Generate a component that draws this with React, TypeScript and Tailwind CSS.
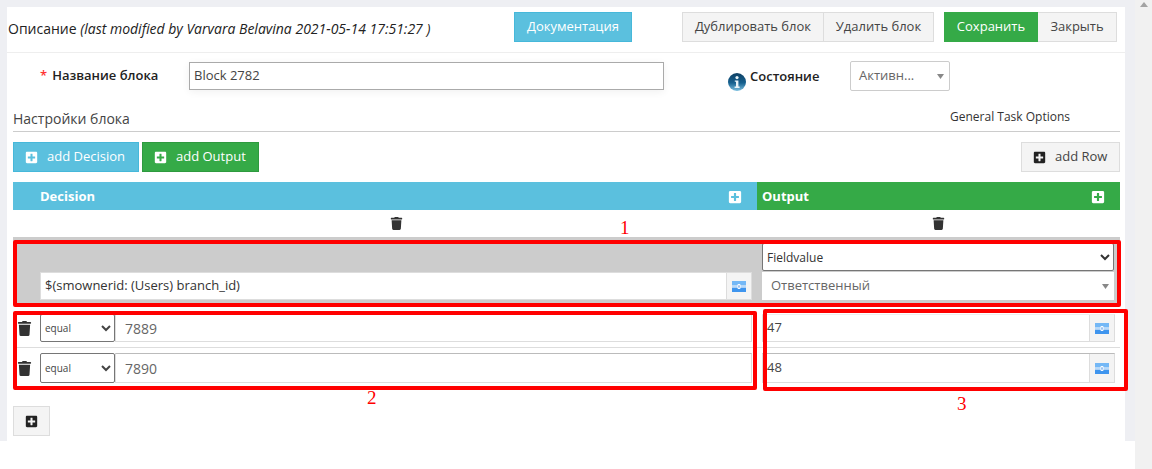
import { FaTrash, FaPlusSquare } from "react-icons/fa";

function AddonIcon() {
  return (
    <svg width="14" height="11" viewBox="0 0 14 11">
      <rect x="0" y="0" width="14" height="4.5" fill="#74b8f6" />
      <rect x="0" y="6.5" width="14" height="4.5" fill="#3f95ee" />
      <rect x="0" y="4.5" width="14" height="2" fill="#b9dafa" />
      <rect x="5.5" y="3" width="3" height="5" rx="1" fill="#ffffff" />
      <rect x="6.4" y="4.3" width="1.2" height="2.4" fill="#5a9be6" />
    </svg>
  );
}

function InfoIcon() {
  return (
    <svg width="18" height="18" viewBox="0 0 18 18" className="shrink-0">
      <defs>
        <linearGradient id="infoGrad" x1="0" y1="0" x2="0" y2="1">
          <stop offset="0" stopColor="#0e3f63" />
          <stop offset="0.55" stopColor="#16618f" />
          <stop offset="1" stopColor="#7cc0e0" />
        </linearGradient>
      </defs>
      <circle cx="9" cy="9" r="9" fill="url(#infoGrad)" />
      <circle cx="9" cy="4.6" r="1.6" fill="#e8f3f8" />
      <path d="M6.8 7.4h3.6v6.2h1.2v1.4H6.6v-1.4h1.4V8.8H6.8z" fill="#e8f3f8" />
    </svg>
  );
}

function Caret() {
  return (
    <svg width="7" height="5" viewBox="0 0 7 5" className="shrink-0">
      <path d="M0 0h7L3.5 5z" fill="#888888" />
    </svg>
  );
}

function InputAddon({ value, h, dark }: { value: string; h: string; dark?: boolean }) {
  return (
    <div className={`flex ${h} bg-white border border-[#dddddd] ${dark ? "border-t-[#bbbbbb]" : "border-t-[#eeeeee]"}`}>
      <div className="flex-1 flex items-center text-[13px] text-[#444444] pl-[4px]">{value}</div>
      <div className="w-[25px] flex items-center justify-center bg-[#f4f4f4] border-l border-[#dddddd]">
        <AddonIcon />
      </div>
    </div>
  );
}

function Row({ value, out, h, dark }: { value: string; out: string; h: string; dark?: boolean }) {
  return (
    <div className="flex">
      <div className="w-[27px] flex items-center pl-[4px] text-[#333333] text-[15px]">
        <FaTrash />
      </div>
      <select className={`w-[75px] ${h} bg-white border border-[#767676] rounded-[2px] text-[10px] text-[#444444]`} defaultValue="equal">
        <option value="equal">equal</option>
      </select>
      <div className={`w-[637px] ${h} flex items-center bg-white border border-[#dddddd] ${dark ? "border-t-[#bbbbbb]" : "border-t-[#eeeeee]"} pl-[9px] text-[14px] text-[#666666]`}>
        {value}
      </div>
      <div className="w-[10px]" />
      <div className="w-[353px]">
        <InputAddon value={out} h={h} dark={dark} />
      </div>
    </div>
  );
}

export default function App() {
  return (
    <div className="relative w-[1152px] h-[469px] overflow-hidden flex bg-[#f1f1f1] font-['Open_Sans',sans-serif] text-[#333333]">
      <div className="w-[1135px] flex flex-col">
        <div className="h-[441px] bg-[#eeeff3] pl-[7px] pt-[7px]">
          <div className="w-[1118px] h-[434px] bg-white">
            {/* Top bar */}
            <div className="h-[46px] flex items-start pt-[5px] border-b border-[#eeeeee] pr-[8px]">
              <div className="w-[507px] pl-[1px] pt-[8px] text-[14px] leading-[18px] text-[#222222] whitespace-nowrap">
                Описание <i>(last modified by Varvara Belavina 2021-05-14 17:51:27 )</i>
              </div>
              <button className="w-[118px] h-[30px] bg-[#5bc0de] border border-[#46b8da] text-white text-[13px]">Документация</button>
              <div className="ml-[50px] flex h-[30px] border border-[#dddddd] bg-[#f4f4f4] text-[13px] text-[#444444]">
                <div className="w-[141px] flex items-center justify-center border-r border-[#dddddd]">Дублировать блок</div>
                <div className="w-[109px] flex items-center justify-center">Удалить блок</div>
              </div>
              <div className="ml-[10px] flex h-[30px] text-[13px]">
                <div className="w-[94px] flex items-center justify-center bg-[#35aa47] text-white">Сохранить</div>
                <div className="w-[79px] flex items-center justify-center bg-[#f4f4f4] border border-l-0 border-[#dddddd] text-[#444444]">Закрыть</div>
              </div>
            </div>

            {/* Name row */}
            <div className="h-[47px] flex items-start pt-[9px]">
              <div className="w-[182px] h-[28px] pl-[33px] flex items-center text-[13px] font-semibold text-[#222222]">
                <span className="text-[#ff3333] mr-[5px]">*</span>Название блока
              </div>
              <div className="w-[475px] h-[28px] border border-[#aaaaaa] shadow-[0_2px_8px_rgba(0,0,0,0.06)] flex items-center pl-[4px] text-[13px] text-[#444444]">
                Block 2782
              </div>
              <div className="ml-[64px] mt-[11px]">
                <InfoIcon />
              </div>
              <div className="ml-[4px] w-[100px] mt-[5px] text-[13px] font-semibold text-[#222222] leading-[18px]">Состояние</div>
              <div className="w-[100px] h-[30px] -mt-[1px] border border-[#cccccc] rounded-[2px] flex items-center justify-between pl-[8px] pr-[5px] text-[13px] text-[#666666]">
                Активн...
                <Caret />
              </div>
            </div>

            {/* Section title */}
            <div className="ml-[6px] w-[1107px] h-[32px] border-b border-[#cccccc] flex items-start justify-between pt-[9px]">
              <span className="text-[14px] leading-[20px] text-[#444444]">Настройки блока</span>
              <span className="mr-[50px] -mt-[1px] text-[12px] leading-[18px] text-[#333333]">General Task Options</span>
            </div>

            {/* Actions */}
            <div className="ml-[6px] w-[1107px] flex items-center mt-[10px] h-[30px]">
              <button className="w-[126px] h-[30px] flex items-center pl-[11px] bg-[#5bc0de] border border-[#46b8da] text-white text-[13px]">
                <FaPlusSquare className="text-[13px] mr-[9px]" />add Decision
              </button>
              <button className="ml-[3px] w-[117px] h-[30px] flex items-center pl-[11px] bg-[#35aa47] border border-[#2e9a3f] text-white text-[13px]">
                <FaPlusSquare className="text-[13px] mr-[9px]" />add Output
              </button>
              <button className="ml-auto w-[99px] h-[30px] flex items-center pl-[11px] bg-[#f4f4f4] border border-[#dddddd] text-[#444444] text-[13px]">
                <FaPlusSquare className="text-[13px] text-[#222222] mr-[9px]" />add Row
              </button>
            </div>

            {/* Table */}
            <div className="ml-[6px] w-[1107px] mt-[10px]">
              <div className="flex h-[28px] text-white text-[13px] font-bold">
                <div className="w-[744px] bg-[#5bc0de] flex items-center justify-between pt-[2px] pl-[27px] pr-[15px]">
                  Decision
                  <FaPlusSquare className="text-[14px]" />
                </div>
                <div className="flex-1 bg-[#35aa47] flex items-center justify-between pt-[2px] pl-[5px] pr-[15px]">
                  Output
                  <FaPlusSquare className="text-[14px]" />
                </div>
              </div>
              <div className="flex h-[27px] items-center text-[#333333] text-[13px]">
                <div className="w-[744px] pl-[377px]"><FaTrash /></div>
                <div className="pl-[175px]"><FaTrash /></div>
              </div>
              <div className="h-[68px] bg-[#cccccc] flex">
                <div className="w-[739px] pl-[27px] pt-[35px]">
                  <div className="h-[28px] w-[712px] flex bg-white border border-[#dddddd]">
                    <div className="flex-1 flex items-center pl-[4px] text-[13px] text-[#333333]">$(smownerid: (Users) branch_id)</div>
                    <div className="w-[25px] flex items-center justify-center bg-[#f4f4f4] border-l border-[#dddddd]"><AddonIcon /></div>
                  </div>
                </div>
                <div className="ml-[10px] w-[352px] pt-[6px]">
                  <select className="w-[352px] h-[28px] bg-white border border-[#767676] rounded-[2px] text-[12px] text-[#333333]" defaultValue="f">
                    <option value="f">Fieldvalue</option>
                  </select>
                  <div className="mt-[1px] h-[28px] bg-white flex items-center justify-between pl-[9px] pr-[5px] text-[13px] text-[#666666]">
                    Ответственный
                    <Caret />
                  </div>
                </div>
              </div>
              <div className="border-b border-[#dddddd] h-[43px] pt-[9px]">
                <Row value="7889" out="47" h="h-[28px]" />
              </div>
              <div className="h-[44px] pt-[5px]">
                <Row value="7890" out="48" h="h-[30px]" dark />
              </div>
            </div>

            {/* Add row */}
            <button className="ml-[6px] mt-[14px] w-[37px] h-[30px] flex items-center justify-center bg-[#f4f4f4] border border-[#dddddd] text-[#222222] text-[13px]">
              <FaPlusSquare />
            </button>
          </div>
        </div>
        <div className="flex-1 bg-white" />
      </div>
      <div className="w-[17px] flex justify-center pt-[2px]">
        <svg width="8" height="5" viewBox="0 0 8 5"><path d="M0 5L4 0l4 5z" fill="#a3a3a3" /></svg>
      </div>

      {/* Red annotations drawn over the screenshot */}
      <div className="absolute left-[13px] top-[240px] w-[1108px] h-[67px] border-[4px] border-[#ff0000] rounded-[2px]" />
      <div className="absolute left-[13px] top-[311px] w-[744px] h-[79px] border-[4px] border-[#ff0000] rounded-[2px]" />
      <div className="absolute left-[763px] top-[309px] w-[365px] h-[82px] border-[4px] border-[#ff0000] rounded-[2px]" />
      <span className="absolute left-[620px] top-[217px] text-[19px] leading-[22px] text-[#ff0000] font-['Liberation_Serif',serif]">1</span>
      <span className="absolute left-[367px] top-[387px] text-[19px] leading-[22px] text-[#ff0000] font-['Liberation_Serif',serif]">2</span>
      <span className="absolute left-[957px] top-[393px] text-[19px] leading-[22px] text-[#ff0000] font-['Liberation_Serif',serif]">3</span>
    </div>
  );
}
